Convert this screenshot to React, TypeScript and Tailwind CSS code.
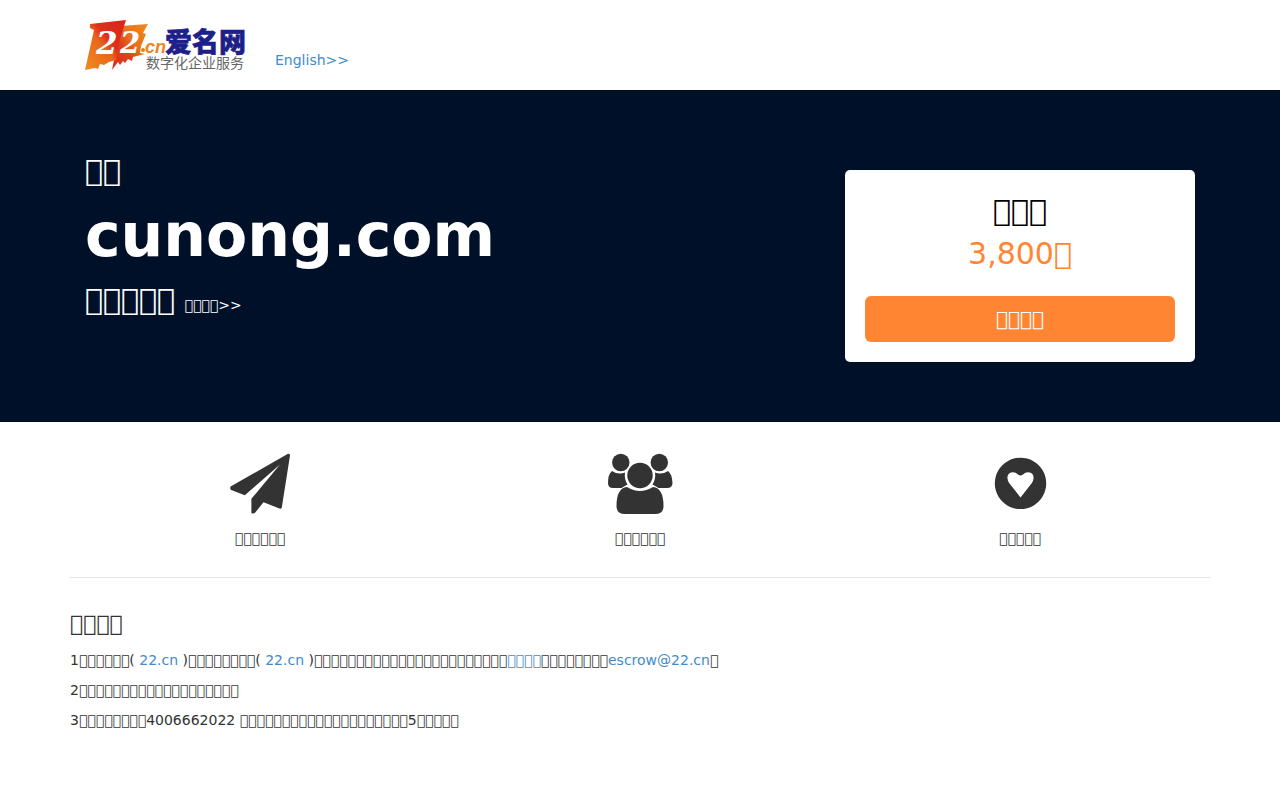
import type { ReactNode } from "react";

// Code point without a glyph, drawn as an empty box by the page font
const glyphs = (count: number) => "\uE83A".repeat(count);

const Logo = () => (
  <svg width="160" height="50" viewBox="0 0 160 50" className="overflow-visible">
    <defs>
      <linearGradient id="flagLeft" x1="0" y1="1" x2="1" y2="0">
        <stop offset="0" stopColor="#f08c1c" />
        <stop offset="0.45" stopColor="#e8681c" />
        <stop offset="0.6" stopColor="#dc301c" />
        <stop offset="1" stopColor="#d8241c" />
      </linearGradient>
      <linearGradient id="flagRight" x1="0" y1="1" x2="1" y2="0">
        <stop offset="0" stopColor="#dc2a1c" />
        <stop offset="0.4" stopColor="#e0401c" />
        <stop offset="0.6" stopColor="#e8701c" />
        <stop offset="1" stopColor="#ee8a1e" />
      </linearGradient>
    </defs>
    <path
      d="M36 6 63 4 58 13 61 14 56 26 55 33 60 34 52 36 48 37 47 41 43 39 40 43 38 41 35 45 33 42 27 50 29 40Z"
      fill="url(#flagRight)"
    />
    <path
      d="M5 4 41 0 35 19 31 40 24 42 19 45 15 44 13 49 10 48 0 50 9 10 5 8Z"
      fill="url(#flagLeft)"
    />
    <g fontFamily="DejaVu Serif, serif" fontWeight="700" fontStyle="italic" fill="#fff">
      <text x="11" y="34" fontSize="31">
        2
      </text>
      <text x="35" y="33" fontSize="29">
        2
      </text>
    </g>
    <circle cx="58" cy="30" r="2" fill="#ea7d1e" />
    <text
      x="60"
      y="33"
      fontSize="18"
      fontFamily="Liberation Sans, sans-serif"
      fontWeight="700"
      fontStyle="italic"
      fill="#ee8420"
    >
      cn
    </text>
    <text
      x="80"
      y="32"
      fontSize="27"
      fontFamily="Noto Sans CJK SC, sans-serif"
      fontWeight="900"
      fill="#1d2088"
      stroke="#1d2088"
      strokeWidth="0.6"
    >
      爱名网
    </text>
    <text
      x="61"
      y="48"
      fontSize="14"
      fontFamily="Noto Sans CJK SC, sans-serif"
      fill="#666"
    >
      数字化企业服务
    </text>
  </svg>
);

const PlaneIcon = () => (
  <svg width="64" height="64" viewBox="0 0 64 64" fill="#333">
    <path d="M60 1.8Q62 1.2 62 3.4L53.8 55.5Q53.3 57.2 51.5 56.6L35.5 50.2 27.2 60.6Q25.5 62.4 23.4 61V46.8L52 12.5 16.8 43.2 3.2 38Q1.2 36 3 34.3Z" />
  </svg>
);

const UsersIcon = () => (
  <svg width="64" height="64" viewBox="0 0 64 64" fill="#333" className="overflow-visible">
    <circle cx="12.8" cy="10.5" r="8.7" />
    <circle cx="51.3" cy="10.5" r="8.7" />
    <circle cx="32" cy="23.5" r="12.7" />
    <path d="M4 19Q8.5 22 13 21.5 16 21 17 20.5 16 27 19.5 32.5L13.5 36H5Q0 36 0 31 0 22 4 19Z" />
    <path d="M60 19Q55.5 22 51 21.5 48 21 47 20.5 48 27 44.5 32.5L50.5 36H59Q64.5 36 64.5 31 64 22 60 19Z" />
    <path d="M19 35Q32 43 45 35 55.5 36 55.5 54 55.5 62 47 62H17Q8.5 62 8.5 54 8.5 36 19 35Z" />
  </svg>
);

const HeartIcon = () => (
  <svg width="64" height="64" viewBox="0 0 64 64" fill="#333">
    <path
      fillRule="evenodd"
      d="M32.5 5.7a25.7 25.7 0 1 0 .01 0ZM32.5 45.500 21.500 31.500Q17.500 25.500 21 21.500 26 18.500 30 22.500 32.500 24.500 35 22.500 39 18.500 44 21.500 47.500 25.500 43.500 31.500Z"
    />
  </svg>
);

const Link = ({ children }: { children: ReactNode }) => (
  <a href="#" className="text-[#428bca] hover:underline">
    {children}
  </a>
);

const features = [
  { icon: <PlaneIcon />, label: glyphs(6) },
  { icon: <UsersIcon />, label: glyphs(6) },
  { icon: <HeartIcon />, label: glyphs(5) },
];

const App = () => {
  return (
    <div className="bg-white font-['DejaVu_Sans',sans-serif] text-sm leading-5 text-[#333]">
      <header className="mx-auto flex max-w-[1170px] items-end gap-[30px] px-[30px] py-5">
        <a href="#">
          <Logo />
        </a>
        <Link>English&gt;&gt;</Link>
      </header>

      <section className="bg-[#001029] text-white">
        <div className="mx-auto flex max-w-[1170px] items-start justify-between px-[30px] py-[60px]">
          <div>
            <p className="text-[30px] leading-[42px]">{glyphs(2)}</p>
            <h1 className="pt-2.5 pb-[11px] text-[60px] leading-[66px] font-bold">cunong.com</h1>
            <p className="text-[30px] leading-[42px]">
              {glyphs(5)}{" "}
              <a href="#" className="text-sm">
                {glyphs(4)}&gt;&gt;
              </a>
            </p>
          </div>
          <div className="mt-5 w-[350px] rounded-[5px] bg-white p-5 text-center">
            <h2 className="text-[30px] leading-[42px] text-black">{glyphs(3)}</h2>
            <p className="text-[30px] leading-[44px] text-[#ff8533]">3,800{glyphs(1)}</p>
            <button
              type="button"
              className="mt-5 h-[46px] w-full rounded-md bg-[#ff8533] text-xl text-white"
            >
              {glyphs(4)}
            </button>
          </div>
        </div>
      </section>

      <main className="mx-auto max-w-[1170px] px-[15px]">
        <ul className="grid grid-cols-3 border-b border-[#e5e5e5] pt-[30px] pb-[29px]">
          {features.map((feature, index) => (
            <li key={index} className="flex flex-col items-center gap-3">
              {feature.icon}
              <span>{feature.label}</span>
            </li>
          ))}
        </ul>

        <section className="pt-[30px]">
          <h3 className="pb-[5px] text-[22px] leading-[32px]">{glyphs(4)}</h3>
          <div className="leading-[30px]">
            <p>
              1{glyphs(6)}( <Link>22.cn</Link> ){glyphs(8)}( <Link>22.cn</Link> ){glyphs(23)}
              <Link>{glyphs(4)}</Link>
              {glyphs(8)}
              <Link>escrow@22.cn</Link>
              {glyphs(1)}
            </p>
            <p>2{glyphs(19)}</p>
            <p>
              3{glyphs(8)}4006662022 {glyphs(20)}5{glyphs(5)}
            </p>
          </div>
        </section>
      </main>
    </div>
  );
};

export default App;
